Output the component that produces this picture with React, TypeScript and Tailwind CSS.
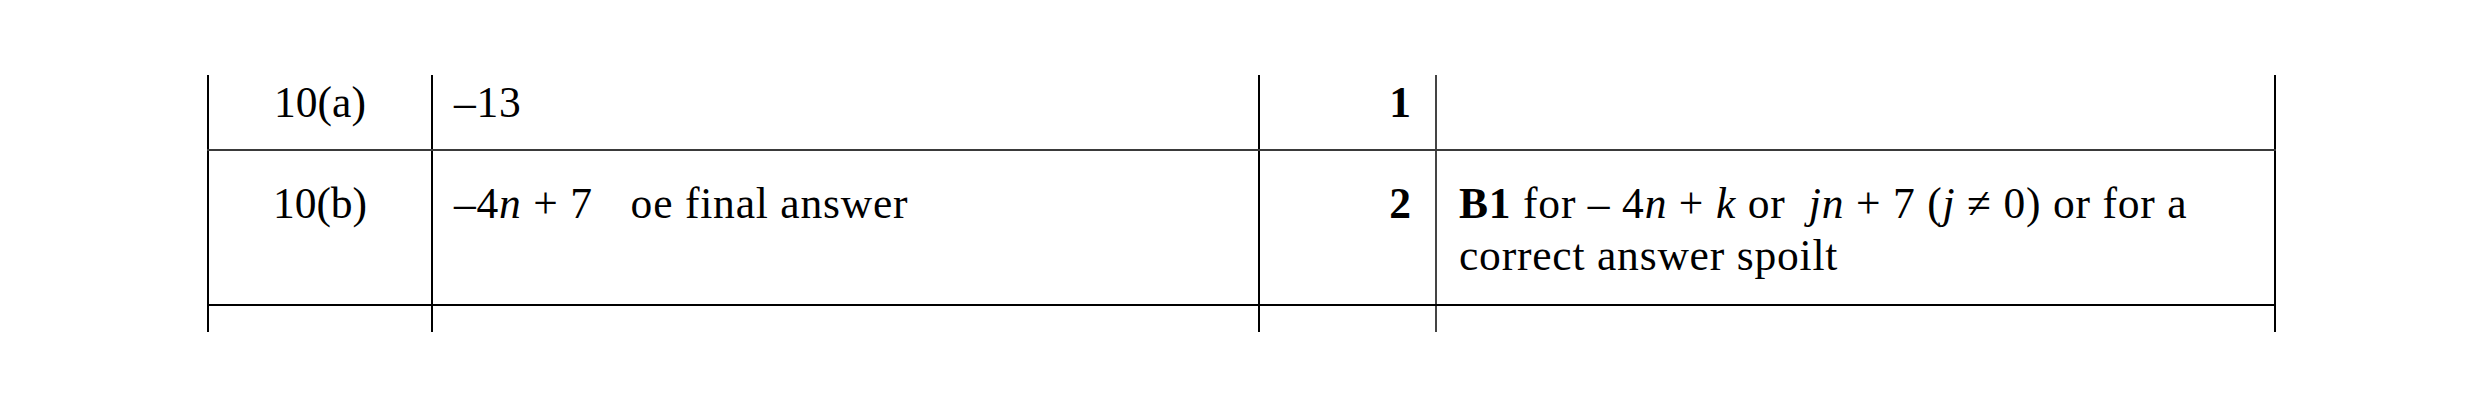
import React from "react";

const serif = { fontFamily: '"Liberation Serif", "Times New Roman", serif' };

export default function App() {
  return (
    <div className="w-[2481px] h-[407px] bg-white text-black" style={serif}>
      <div className="pt-[75px] pl-[207px]">
        <div className="w-[2069px] text-[43.5px] leading-[52px]">
          {/* Row 1 */}
          <div className="flex h-[76px] border-b-2 border-[#3a3a3a]">
            <div className="w-[224px] border-l-2 border-black pt-[1px] text-center">10(a)</div>
            <div className="w-[827px] border-l-2 border-black pt-[1px] pl-[21px] tracking-[0.8px]">–13</div>
            <div className="w-[177px] border-l-2 border-black pt-[1px] pr-[24px] text-right font-bold">1</div>
            <div className="w-[841px] border-l-2 border-r-2 border-l-[#444] border-r-black pt-[1px]"></div>
          </div>
          {/* Row 2 */}
          <div className="flex h-[155px] border-b-2 border-black">
            <div className="w-[224px] border-l-2 border-black pt-[26px] text-center">10(b)</div>
            <div className="w-[827px] border-l-2 border-black pt-[26px] pl-[21px] tracking-[0.8px]">
              –4<i>n</i> + 7<span className="inline-block w-[26px]"></span> oe final answer
            </div>
            <div className="w-[177px] border-l-2 border-black pt-[26px] pr-[24px] text-right font-bold">2</div>
            <div className="w-[841px] border-l-2 border-r-2 border-l-[#444] border-r-black pt-[26px] pl-[22px] tracking-[0.8px]">
              <b>B1</b> for – 4<i>n</i> + <i>k</i> or&nbsp; <i>j</i><i>n</i> + 7 (<i>j</i> ≠ 0) or for a
              <br />
              correct answer spoilt
            </div>
          </div>
          {/* Row 3 */}
          <div className="flex h-[26px]">
            <div className="w-[224px] border-l-2 border-black"></div>
            <div className="w-[827px] border-l-2 border-black"></div>
            <div className="w-[177px] border-l-2 border-black"></div>
            <div className="w-[841px] border-l-2 border-r-2 border-l-[#444] border-r-black"></div>
          </div>
        </div>
      </div>
    </div>
  );
}
